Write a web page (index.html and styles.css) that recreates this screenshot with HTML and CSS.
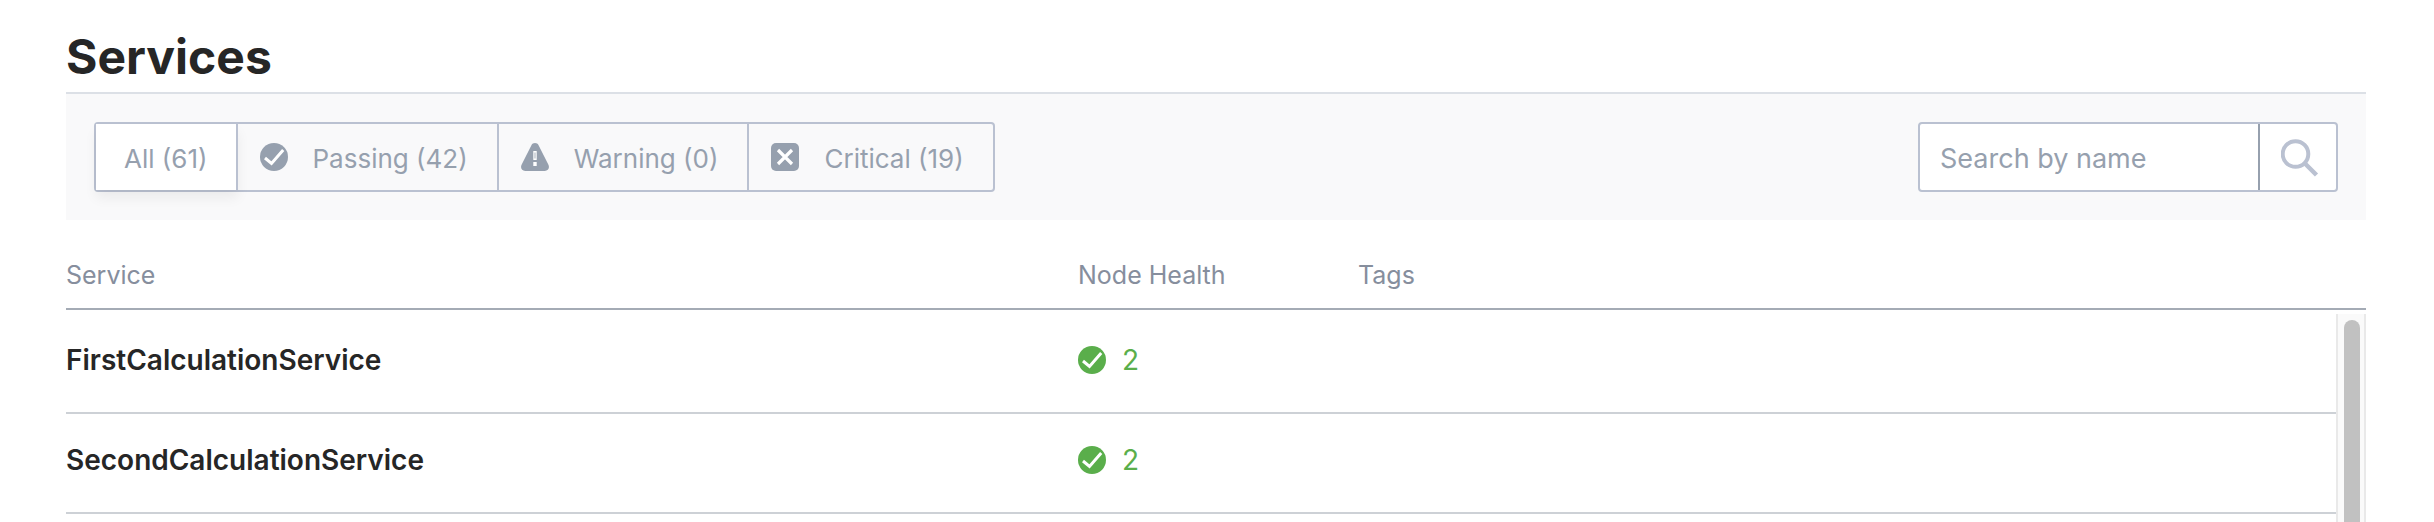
FILE: index.html
```
<!DOCTYPE html>
<html lang="en">
<head>
<meta charset="utf-8">
<title>Services</title>
<link rel="stylesheet" href="styles.css">
</head>
<body>
<svg class="defs" aria-hidden="true">
  <symbol id="i-pass" viewBox="0 0 28 28"><circle cx="14" cy="14" r="14" fill="currentColor"/><path d="M5 15l6.500 5.500L23.200 7" fill="none" stroke="#fff" stroke-width="3"/></symbol>
  <symbol id="i-warn" viewBox="0 0 28 28"><path d="M10.300 2.500C11.800-.7 16.200-.7 17.700 2.500L27.300 21.500C29 25 27.200 28 23.800 28H4.200C.8 28-1 25 .7 21.500Z" fill="currentColor"/><path d="M12.300 8h3.400v9h-3.400zM12.300 19h3.400v4h-3.400z" fill="#fff"/><path d="M13.600 9.500h.8v6h-.8z" fill="currentColor"/></symbol>
  <symbol id="i-crit" viewBox="0 0 28 28"><rect width="28" height="28" rx="5" fill="currentColor"/><path d="M7 7l14 14M21 7L7 21" fill="none" stroke="#fff" stroke-width="3.200"/></symbol>
  <symbol id="i-search" viewBox="0 0 38 38"><circle cx="14.500" cy="15" r="12.800" fill="none" stroke="currentColor" stroke-width="4"/><path d="M24 24.500L35.500 36" stroke="currentColor" stroke-width="4.500"/></symbol>
</svg>
<main class="page">
  <h1 class="title">Services</h1>
  <form class="filter-bar">
    <div class="filters" role="group" aria-label="Health status">
      <button type="button" class="filter active" aria-pressed="true"><span class="label">All (61)</span></button>
      <button type="button" class="filter with-icon"><svg class="status"><use href="#i-pass"/></svg><span class="label">Passing (42)</span></button>
      <button type="button" class="filter with-icon"><svg class="status"><use href="#i-warn"/></svg><span class="label">Warning (0)</span></button>
      <button type="button" class="filter with-icon"><svg class="status"><use href="#i-crit"/></svg><span class="label">Critical (19)</span></button>
    </div>
    <div class="search">
      <input class="search-input" type="text" placeholder="Search by name" aria-label="Search by name">
      <button type="button" class="search-button" aria-label="Search"><svg class="search-icon"><use href="#i-search"/></svg></button>
    </div>
  </form>
  <div class="listing">
    <table class="services">
      <thead>
        <tr><th class="col-service">Service</th><th class="col-health">Node Health</th><th>Tags</th></tr>
      </thead>
      <tbody>
        <tr><td class="name">FirstCalculationService</td><td><span class="health"><svg class="status"><use href="#i-pass"/></svg>2</span></td><td></td></tr>
        <tr><td class="name">SecondCalculationService</td><td><span class="health"><svg class="status"><use href="#i-pass"/></svg>2</span></td><td></td></tr>
      </tbody>
    </table>
    <div class="scrollbar"><div class="thumb"></div></div>
  </div>
</main>
</body>
</html>
```
FILE: styles.css
```
* { box-sizing: border-box; }
body { margin: 0; background: #fff; color: #262626; font-family: Inter, "Liberation Sans", sans-serif; font-size: 28px; line-height: 36px; }
button, input { font: inherit; margin: 0; }
.defs { display: none; }
.page { display: flex; flex-direction: column; height: 100vh; overflow: hidden; padding: 26px 68px 0 66px; }
.title { margin: 0; padding-bottom: 4px; font-size: 48px; line-height: 62px; font-weight: 700; border-bottom: 2px solid #dce0e6; }
.filter-bar { display: flex; justify-content: space-between; flex: none; padding: 28px; background: #f9f9fa; }
.filters { display: flex; border: 2px solid #bac1d1; border-radius: 4px; }
.filter { display: flex; align-items: center; height: 66px; padding: 0 28px; border: 0; border-right: 2px solid #bac1d1; background: transparent; color: #96a0ae; font-size: 26px; white-space: nowrap; }
.filter:last-child { border-right: 0; }
.active { background: #fff; box-shadow: 0 8px 12px rgba(0, 0, 0, 0.06); }
.with-icon { gap: 25px; padding: 0 29px 0 22px; }
.label { padding-top: 3px; }
.status { display: block; flex: none; width: 28px; height: 28px; }
.search { display: flex; width: 420px; height: 70px; border: 2px solid #bac1d1; border-radius: 4px; background: #fff; overflow: hidden; }
.search-input { flex: 1; min-width: 0; padding: 3px 20px 0; border: 0; outline: 0; background: transparent; color: #262626; font-size: 27px; }
.search-input::placeholder { color: #96a0ae; opacity: 1; }
.search-button { display: flex; align-items: center; justify-content: center; width: 78px; padding: 2px 0 0 4px; border: 0; border-left: 2px solid #96a0ae; background: transparent; color: #bac1d1; }
.search-icon { display: block; width: 38px; height: 38px; }
.listing { position: relative; flex: 1; min-height: 0; overflow: hidden; }
.services { width: 100%; table-layout: fixed; border-collapse: separate; border-spacing: 0; }
.services th { height: 90px; padding: 22px 0 0; border-bottom: 2px solid #a4abb5; color: #868e9d; font-size: 25px; font-weight: 400; text-align: left; }
.col-service { width: 44%; }
.col-health { width: 280px; }
.services td { height: 100px; padding: 0 0 6px; border-bottom: 2px solid #cdd1d6; }
.services tbody tr:first-child td { height: 104px; padding-top: 4px; }
.name { font-weight: 600; }
.health { display: flex; align-items: center; gap: 16px; color: #5aae4b; }
.scrollbar { position: absolute; top: 94px; right: 0; bottom: 0; width: 30px; padding: 6px 6px 0; border: solid #e9e9e9; border-width: 0 2px; background: #fafafa; }
.thumb { width: 16px; height: 100%; border-radius: 8px 8px 0 0; background: #c1c1c1; }
```
